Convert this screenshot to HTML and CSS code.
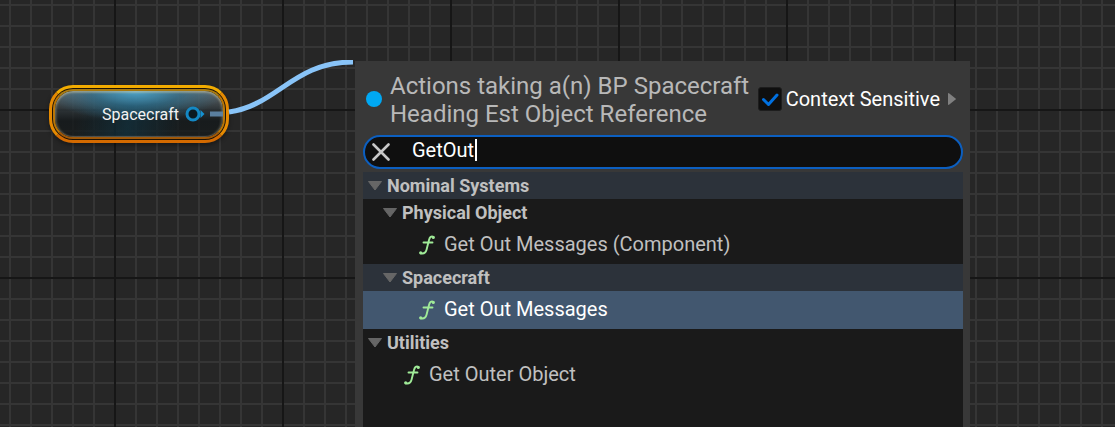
FILE: index.html
```html
<!DOCTYPE html>
<html lang="en">
<head>
<meta charset="utf-8">
<title>Blueprint graph</title>
<link rel="stylesheet" href="styles.css">
</head>
<body>
<svg class="defs" aria-hidden="true">
  <symbol id="fn" viewBox="0 0 16 20">
    <path d="M14.500 1.800C11.800 .8 10.700 2.500 10 5L7.600 14.500C6.700 18 4.500 18.900 1.800 18.300M4.500 7.500H13.500" fill="none" stroke="currentColor" stroke-width="1.900" stroke-linecap="round"/>
    <circle cx="14.300" cy="2.400" r="1.500" fill="currentColor"/>
    <circle cx="1.700" cy="17.800" r="1.600" fill="currentColor"/>
  </symbol>
  <symbol id="fold" viewBox="0 0 16 10">
    <path d="M1.500 .5h13L8 9z" fill="currentColor" stroke="currentColor" stroke-linejoin="round"/>
  </symbol>
</svg>
<main class="canvas">
  <div class="node">
    <div class="node-body">
      <span>Spacecraft</span>
      <svg class="pin" viewBox="0 0 20 16" aria-hidden="true">
        <circle cx="8" cy="8" r="6" fill="#0b1a22" stroke="#1488c4" stroke-width="3"/>
        <path d="M15.500 4L19.500 8l-4 4z" fill="#1492d2"/>
      </svg>
    </div>
  </div>
  <svg class="wire" viewBox="0 0 153 60" aria-hidden="true">
    <path d="M29 52C78 45 93 2 153 2" fill="none" stroke="#89c4f8" stroke-width="5"/>
    <path d="M10 54H23" stroke="#5a7f9f" stroke-width="5"/>
  </svg>
  <section class="menu">
    <header class="menu-head">
      <span class="type-dot"></span>
      <h1>Actions taking a(n) BP Spacecraft Heading Est Object Reference</h1>
      <label class="context">
        <input type="checkbox" checked>
        <svg class="tick" viewBox="0 0 24 24" aria-hidden="true"><path d="M5.500 12.500l5 5L19 8" fill="none" stroke="#0070e0" stroke-width="3" stroke-linecap="round" stroke-linejoin="round"/></svg>
        Context Sensitive
      </label>
      <button class="expand" aria-label="More options"><svg viewBox="0 0 8 12"><path d="M0 1v10q0 1.500 1.300 .6L7.600 6.600q.6-.6 0-1.200L1.300 .4Q0-.5 0 1z" fill="#808080"/></svg></button>
    </header>
    <div class="search">
      <button class="clear" aria-label="Clear search"><svg viewBox="0 0 18 18"><path d="M1.500 1.500l15 15m0-15l-15 15" stroke="#c8c8c8" stroke-width="2.600" stroke-linecap="round"/></svg></button>
      <input class="query" type="text" value="GetOut" size="4" aria-label="Search actions">
      <span class="caret"></span>
    </div>
    <div class="tree">
      <div class="group shaded"><svg class="fold"><use href="#fold"/></svg>Nominal Systems</div>
      <div class="group nested"><svg class="fold"><use href="#fold"/></svg>Physical Object</div>
      <div class="action nested"><svg class="fn"><use href="#fn"/></svg>Get Out Messages (Component)</div>
      <div class="group nested shaded"><svg class="fold"><use href="#fold"/></svg>Spacecraft</div>
      <div class="action nested selected"><svg class="fn"><use href="#fn"/></svg>Get Out Messages</div>
      <div class="group"><svg class="fold"><use href="#fold"/></svg>Utilities</div>
      <div class="action"><svg class="fn"><use href="#fn"/></svg>Get Outer Object</div>
    </div>
  </section>
</main>
</body>
</html>
```
FILE: styles.css
```css
* { box-sizing: border-box; }
body { margin: 0; font-family: Roboto, sans-serif; color: #c0c0c0; }
svg { display: block; flex: none; }
button { padding: 0; border: 0; background: none; }
.defs { position: absolute; width: 0; height: 0; }

.canvas {
  position: relative;
  min-height: 100vh;
  overflow: hidden;
  background-color: #262626;
  background-image:
    linear-gradient(90deg, #161616 2px, transparent 2px),
    linear-gradient(#161616 2px, transparent 2px),
    linear-gradient(90deg, #353535 2px, transparent 2px),
    linear-gradient(#353535 2px, transparent 2px);
  background-size: 168px 168px, 168px 168px, 21px 21px, 21px 21px;
  background-position: 114px 0, 0 109px, 9px 0, 0 4px;
}

.node {
  position: absolute;
  left: 49px;
  top: 85px;
  padding: 6px;
  border-radius: 24px;
  box-shadow: 0 2px 4px #0006;
}
/* Selection outline: two gradient rings with a dark gap, the inside left see-through. */
.node::before,
.node::after {
  content: "";
  position: absolute;
  inset: 0;
  padding: 4px;
  border-radius: 24px;
  background: linear-gradient(#f8b400, #e68a00 50%, #d06500);
  mask: linear-gradient(#000 0 0) content-box exclude, linear-gradient(#000 0 0);
}
.node::before,
.node::after {
  mask: none;
  background: none;
  padding: 0;
  border: 3px solid #e68a00;
  border-color: #f2ac00 #e68a00 #d46a00;
}
.node::after {
  inset: 4px;
  border-width: 2px;
  border-radius: 20px;
  border-color: #a87a10 #b87608 #a05808;
}
.node-body {
  display: flex;
  align-items: center;
  justify-content: flex-end;
  gap: 6px;
  width: 168px;
  height: 46px;
  padding-right: 18px;
  border-radius: 18px;
  background:
    radial-gradient(ellipse 90px 30px at 48% 0, #4fa5cb, #2d769899 50%, transparent),
    linear-gradient(100deg, transparent 15%, #0e3a4c80 45%, transparent 75%),
    linear-gradient(#70777bdd, #30383ccc 40%, #14191bcc 65%, #171b1ccc);
  box-shadow: 0 0 0 3px #1c1206, inset 0 2px 2px #e0d8b066, inset 2px 0 2px #b0a88044, inset -2px 0 2px #b0a88044, inset 0 -1px 1px #90888066;
  color: #f2f2f2;
  font-size: 16px;
}
.pin { width: 20px; height: 16px; }
.wire { position: absolute; left: 200px; top: 60px; width: 153px; height: 60px; }

.menu {
  position: absolute;
  left: 355px;
  right: 145px;
  top: 61px;
  bottom: 0;
  display: flex;
  flex-direction: column;
  padding: 11px 7px 0 8px;
  background: #383838;
}
.menu-head { display: flex; align-items: center; padding: 0 7px 7px 3px; }
.type-dot { flex: none; width: 16px; height: 16px; margin-bottom: 2px; border-radius: 50%; background: #00a8f3; }
h1 { flex: 1; margin: 0 0 0 8px; font-size: 24px; font-weight: 400; line-height: 28px; color: #b8b8b8; }
.context { position: relative; display: flex; align-items: center; gap: 4px; margin-bottom: 2px; color: #fff; font-size: 20px; white-space: nowrap; }
.context input { appearance: none; width: 24px; height: 24px; margin: 0; border: 1px solid #1d1d1d; border-radius: 3px; background: #0f0f0f; }
.tick { position: absolute; left: 0; width: 24px; height: 24px; }
.expand { margin: 0 0 2px 8px; }
.expand svg { width: 8px; height: 12px; }

.search { display: flex; align-items: center; height: 34px; margin-bottom: 3px; padding-left: 7px; border: 2px solid #0c5fc0; border-radius: 17px; background: #0f0f0f; }
.clear svg { width: 18px; height: 18px; }
.query { field-sizing: content; margin: 0 0 4px 22px; padding: 0; border: 0; outline: 0; background: none; color: #fff; font: 20px Roboto, sans-serif; }
.caret { width: 2px; height: 22px; margin: 0 0 4px 1px; background: #fff; }

.tree { flex: 1; background: #1a1a1a; }
.group { display: flex; align-items: center; gap: 4px; height: 27px; padding-left: 4px; font-size: 18px; font-weight: 700; }
.group.nested { padding-left: 19px; }
.shaded { background: #2c323a; }
.fold { width: 16px; height: 10px; color: #666; }
.action { display: flex; align-items: center; gap: 9px; height: 38px; padding: 0 0 2px 41px; font-size: 20px; }
.action.nested { padding-left: 56px; }
.selected { background: #42576f; color: #fff; }
.fn { width: 16px; height: 20px; margin-top: 2px; color: #a0eb98; }
```
